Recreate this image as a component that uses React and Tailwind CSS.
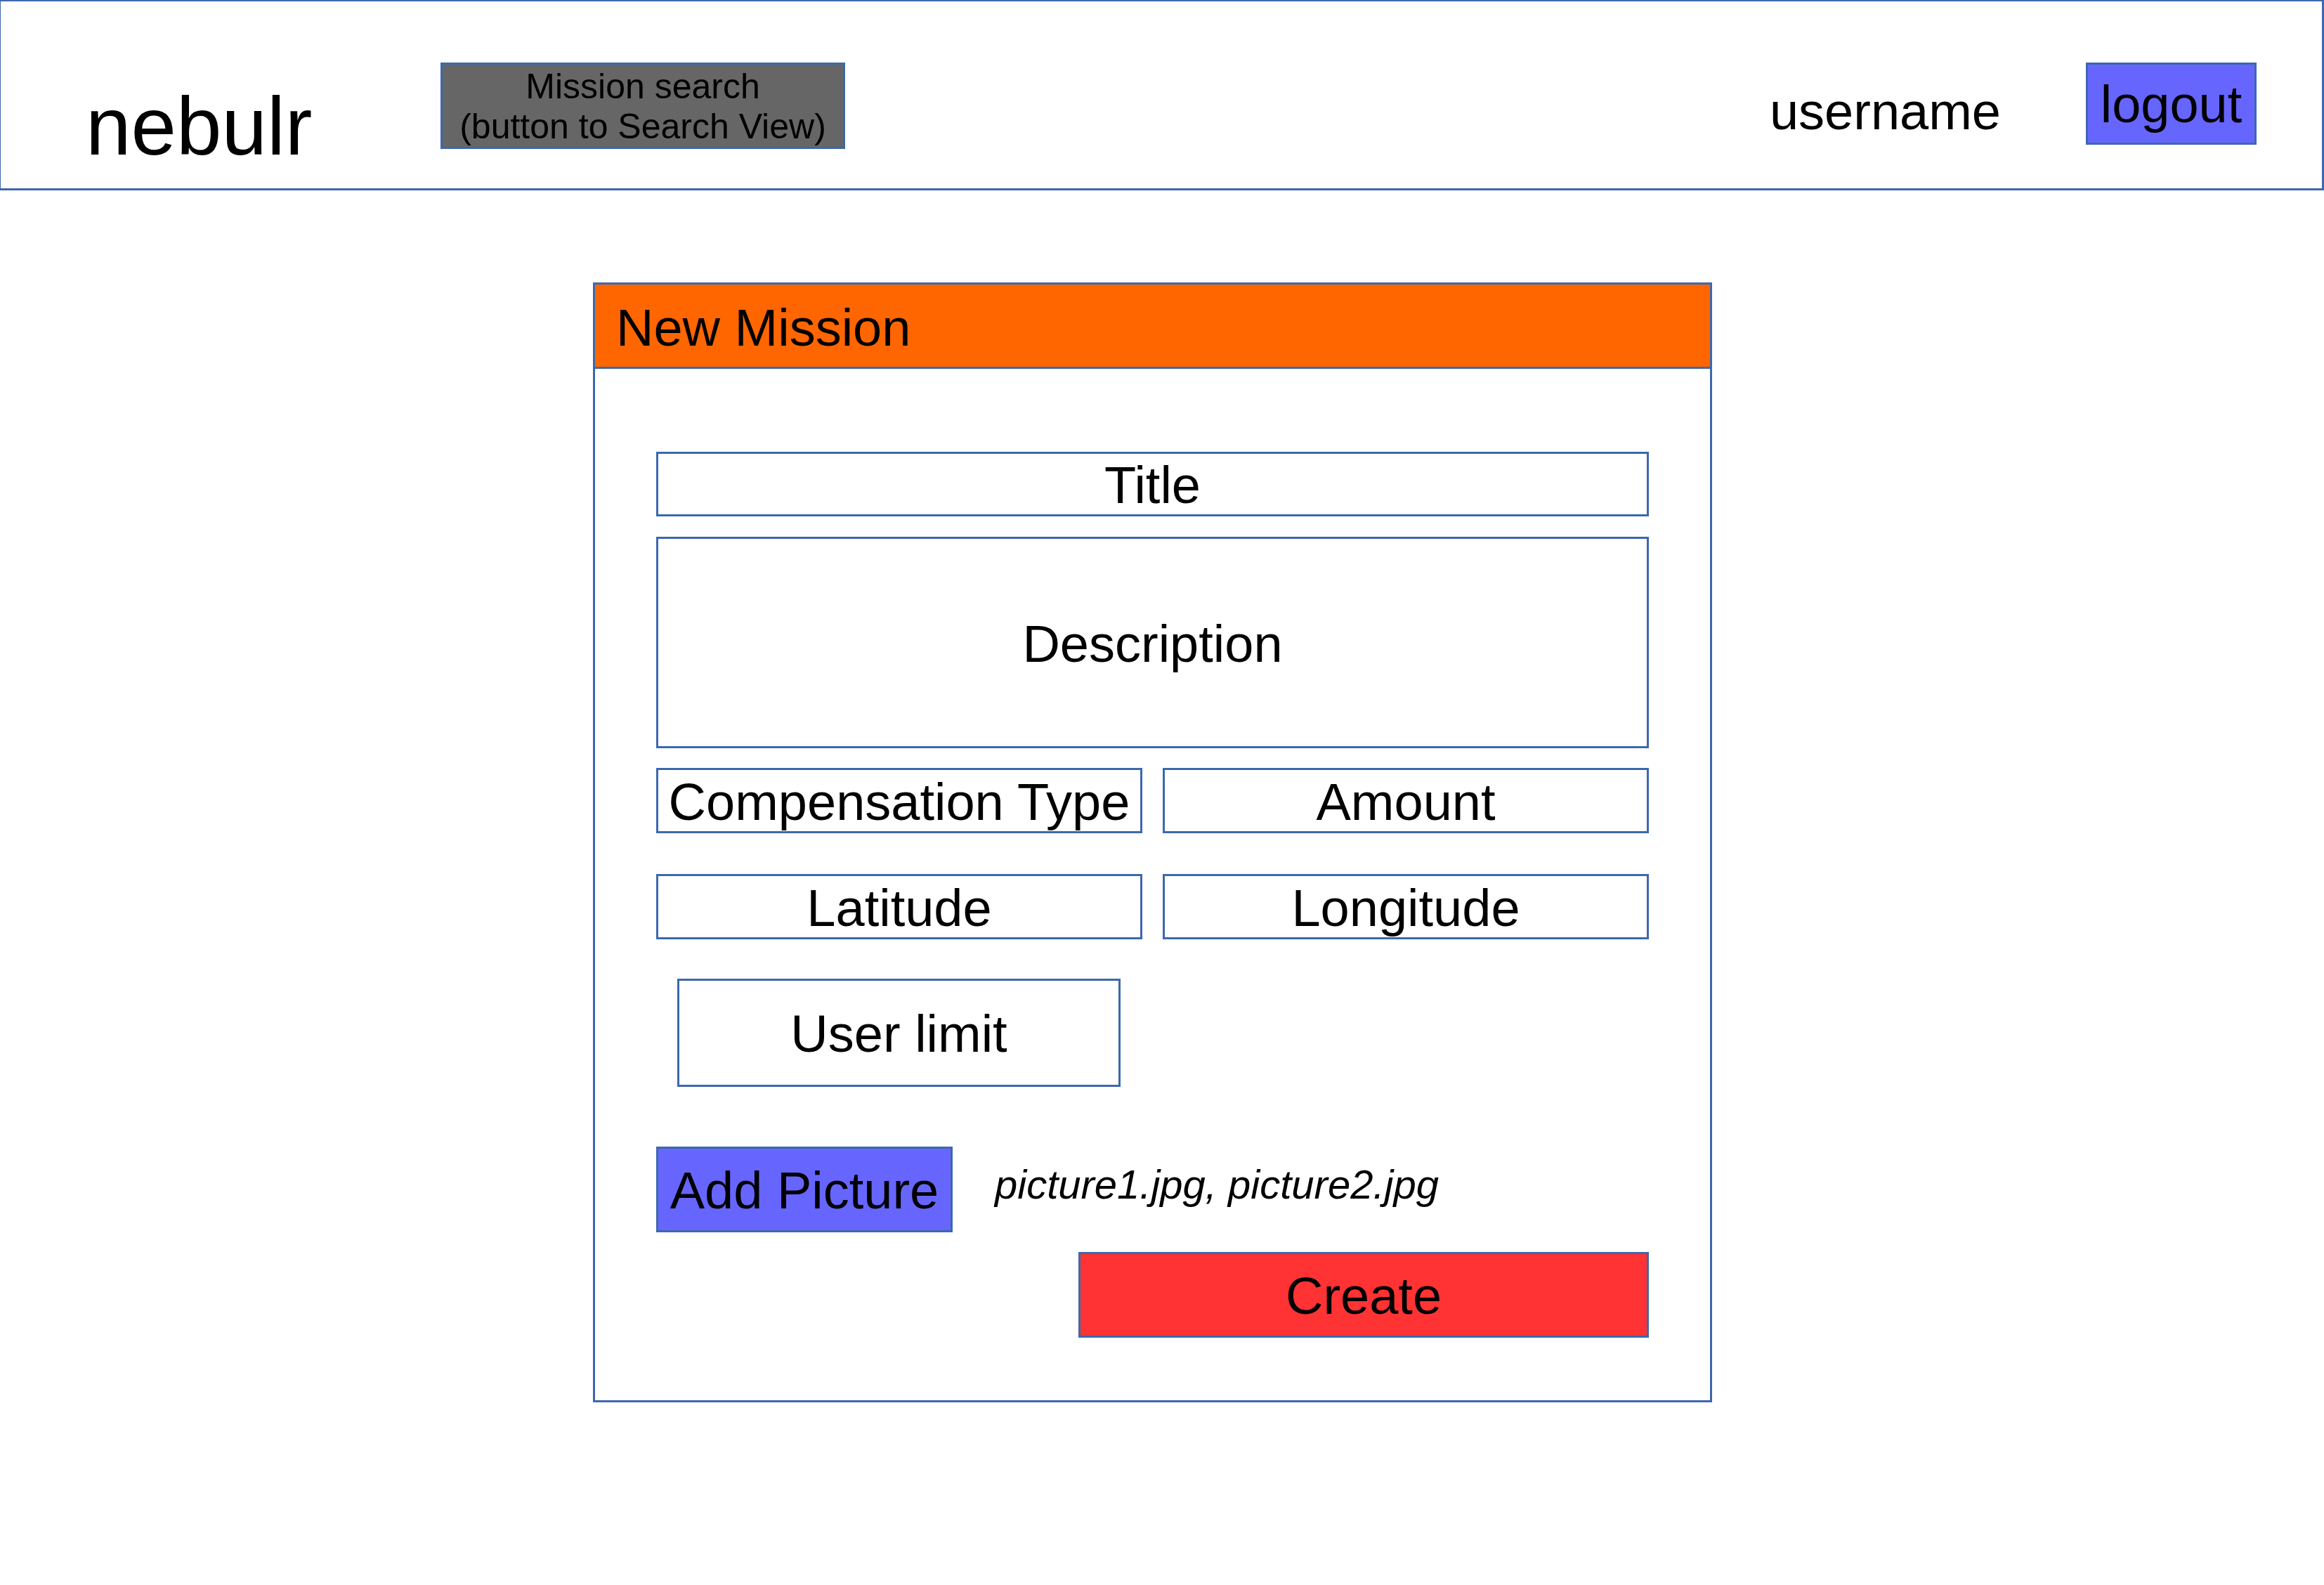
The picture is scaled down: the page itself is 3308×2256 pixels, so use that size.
import React from 'react';

const font = "font-['Liberation_Sans',Arial,sans-serif]";

// bordered field box with centred label
function Field({ label, className = '' }) {
  return (
    <div
      className={`flex items-center justify-center border-[3px] border-[#3d68ad] bg-white pt-[4px] text-[74px] leading-none whitespace-nowrap text-black ${className}`}
    >
      {label}
    </div>
  );
}

export default function App() {
  return (
    <div className={`min-h-screen w-[3308px] bg-white ${font}`}>
      {/* Top bar */}
      <header className="flex h-[271px] items-start border-t-2 border-l border-r-[3px] border-b-[3px] border-[#3d68ad] pl-[121px] pr-[93px]">
        <div className="mt-[120px] w-[505px] text-[116px] leading-none text-black">nebulr</div>
        <button className="mt-[87px] flex h-[123px] w-[576px] flex-col items-center justify-center border-[3px] border-[#3d68ad] bg-[#666666] pt-[2px] text-[50px] leading-[57px] text-black">
          <span>Mission search</span>
          <span>(button to Search View)</span>
        </button>
        <div className="ml-auto mt-[120px] text-[74px] leading-none text-black">username</div>
        <button className="ml-[121px] mt-[87px] flex h-[117px] w-[243px] items-center justify-center border-[3px] border-[#3d68ad] bg-[#6666ff] pt-[3px] text-[74px] leading-none text-black">
          logout
        </button>
      </header>

      {/* New mission card */}
      <div className="ml-[844px] mt-[131px] w-[1593px] border-[3px] border-[#3d68ad]">
        <div className="h-[120px] border-b-[3px] border-[#3d68ad] bg-[#ff6600] pl-[30px] pt-[25px] text-[74px] leading-none text-black">
          New Mission
        </div>

        <div className="flex flex-col px-[87px] pt-[118px] pb-[89px]">
          <Field label="Title" className="h-[92px]" />
          <Field label="Description" className="mt-[29px] h-[301px]" />

          <div className="mt-[28px] grid grid-cols-2 gap-x-[29px]">
            <Field label="Compensation Type" className="h-[93px]" />
            <Field label="Amount" className="h-[93px]" />
          </div>

          <div className="mt-[58px] grid grid-cols-2 gap-x-[29px]">
            <Field label="Latitude" className="h-[93px]" />
            <Field label="Longitude" className="h-[93px]" />
          </div>

          <Field label="User limit" className="ml-[30px] mt-[56px] h-[154px] w-[631px]" />

          <div className="mt-[85px] flex items-start">
            <button className="flex h-[122px] w-[422px] items-center justify-center border-[3px] border-[#3d68ad] bg-[#6666ff] pt-[4px] text-[74px] leading-none text-black">
              Add Picture
            </button>
            <span className="ml-[60px] mt-[25px] text-[58px] leading-none italic text-black">
              picture1.jpg, picture2.jpg
            </span>
          </div>

          <button className="ml-auto mt-[28px] flex h-[122px] w-[812px] items-center justify-center border-[3px] border-[#3d68ad] bg-[#ff3333] pt-[4px] text-[74px] leading-none text-black">
            Create
          </button>
        </div>
      </div>
    </div>
  );
}
